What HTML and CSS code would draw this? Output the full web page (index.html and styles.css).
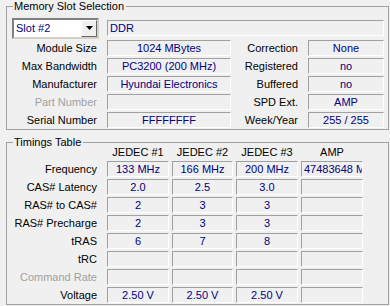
FILE: index.html
```html
<!DOCTYPE html>
<html lang="en">
<head>
  <meta charset="UTF-8" />
  <title>SPD</title>
  <link rel="stylesheet" href="styles.css">
</head>
<body>
  <fieldset class="group slot-group">
    <legend>Memory Slot Selection</legend>
    <div class="slot-grid">
      <div class="combo">
        <span class="combo-text">Slot #2</span>
        <span class="combo-btn">
          <svg width="7" height="4" viewBox="0 0 7 4"><path d="M0 0h7L3.5 4z" fill="#000"/></svg>
        </span>
      </div>
      <div class="field wide left">DDR</div>

      <div class="label">Module Size</div>
      <div class="field">1024 MBytes</div>
      <div class="label">Correction</div>
      <div class="field">None</div>

      <div class="label">Max Bandwidth</div>
      <div class="field">PC3200 (200 MHz)</div>
      <div class="label">Registered</div>
      <div class="field">no</div>

      <div class="label">Manufacturer</div>
      <div class="field">Hyundai Electronics</div>
      <div class="label">Buffered</div>
      <div class="field">no</div>

      <div class="label disabled">Part Number</div>
      <div class="field"></div>
      <div class="label">SPD Ext.</div>
      <div class="field">AMP</div>

      <div class="label">Serial Number</div>
      <div class="field">FFFFFFFF</div>
      <div class="label">Week/Year</div>
      <div class="field">255 / 255</div>
    </div>
  </fieldset>

  <fieldset class="group timing-group">
    <legend>Timings Table</legend>
    <div class="timing-grid">
      <div class="label"></div>
      <div class="head">JEDEC #1</div>
      <div class="head">JEDEC #2</div>
      <div class="head">JEDEC #3</div>
      <div class="head">AMP</div>

      <div class="label">Frequency</div>
      <div class="field">133 MHz</div>
      <div class="field">166 MHz</div>
      <div class="field">200 MHz</div>
      <div class="field left">47483648 MHz</div>

      <div class="label">CAS# Latency</div>
      <div class="field">2.0</div>
      <div class="field">2.5</div>
      <div class="field">3.0</div>
      <div class="field"></div>

      <div class="label">RAS# to CAS#</div>
      <div class="field">2</div>
      <div class="field">3</div>
      <div class="field">3</div>
      <div class="field"></div>

      <div class="label">RAS# Precharge</div>
      <div class="field">2</div>
      <div class="field">3</div>
      <div class="field">3</div>
      <div class="field"></div>

      <div class="label">tRAS</div>
      <div class="field">6</div>
      <div class="field">7</div>
      <div class="field">8</div>
      <div class="field"></div>

      <div class="label">tRC</div>
      <div class="field"></div>
      <div class="field"></div>
      <div class="field"></div>
      <div class="field"></div>

      <div class="label disabled">Command Rate</div>
      <div class="field"></div>
      <div class="field"></div>
      <div class="field"></div>
      <div class="field"></div>

      <div class="label">Voltage</div>
      <div class="field">2.50 V</div>
      <div class="field">2.50 V</div>
      <div class="field">2.50 V</div>
      <div class="field"></div>
    </div>
  </fieldset>
</body>
</html>
```

FILE: styles.css
```css
* {
  box-sizing: border-box;
}

html, body {
  margin: 0;
  padding: 0;
  width: 390px;
  height: 306px;
  overflow: hidden;
  background: #f0f0f0;
  font-family: 'Liberation Sans', Arial, sans-serif;
  font-size: 11px;
  color: #000;
}

.group {
  margin: 0 1px 0 6px;
  padding: 0;
  border: 1px solid #a0a0a0;
  min-width: 0;
}

.group legend {
  margin-left: 6px;
  padding: 0 2px 0 1px;
  line-height: 13px;
}

.slot-group {
  padding: 5px 4px 1px 0;
}

.timing-group {
  margin-top: 6px;
  padding: 0 4px 1px 0;
}

.slot-grid {
  display: grid;
  grid-template-columns: 90px 124px 57px 76px;
  grid-template-rows: 20px repeat(5, 16px);
  column-gap: 10px;
  row-gap: 2px;
  align-items: center;
}

.timing-grid {
  margin-top: -4px;
  display: grid;
  grid-template-columns: 97px 62px 61px 62px 62px;
  grid-template-rows: 14px repeat(8, 16px);
  column-gap: 3px;
  row-gap: 2px;
  align-items: center;
}

.timing-grid .label {
  padding-right: 7px;
}

.label {
  text-align: right;
  white-space: nowrap;
}

.label.disabled {
  color: #a0a0a0;
}

.head {
  text-align: center;
  white-space: nowrap;
}

.field {
  height: 16px;
  display: flex;
  align-items: center;
  justify-content: center;
  overflow: hidden;
  white-space: nowrap;
  color: #000080;
  border-top: 1px solid #a0a0a0;
  border-left: 1px solid #a0a0a0;
  border-right: 1px solid #fff;
  border-bottom: 1px solid #fff;
}

.field.left {
  justify-content: flex-start;
  padding-left: 2px;
}

.field.wide {
  grid-column: 2 / 5;
}

.combo {
  justify-self: end;
  width: 87px;
  height: 21px;
  margin-right: -2px;
  display: flex;
  align-items: stretch;
  background: #fff;
  border: 2px solid;
  border-color: #808080 #d4d0c8 #d4d0c8 #808080;
}

.combo-text {
  flex: 1;
  display: flex;
  align-items: center;
  padding-left: 2px;
  color: #000080;
}

.combo-btn {
  width: 16px;
  display: flex;
  align-items: center;
  justify-content: center;
  background: #f0f0f0;
  border: 1px solid;
  border-color: #fff #696969 #696969 #fff;
}
```
